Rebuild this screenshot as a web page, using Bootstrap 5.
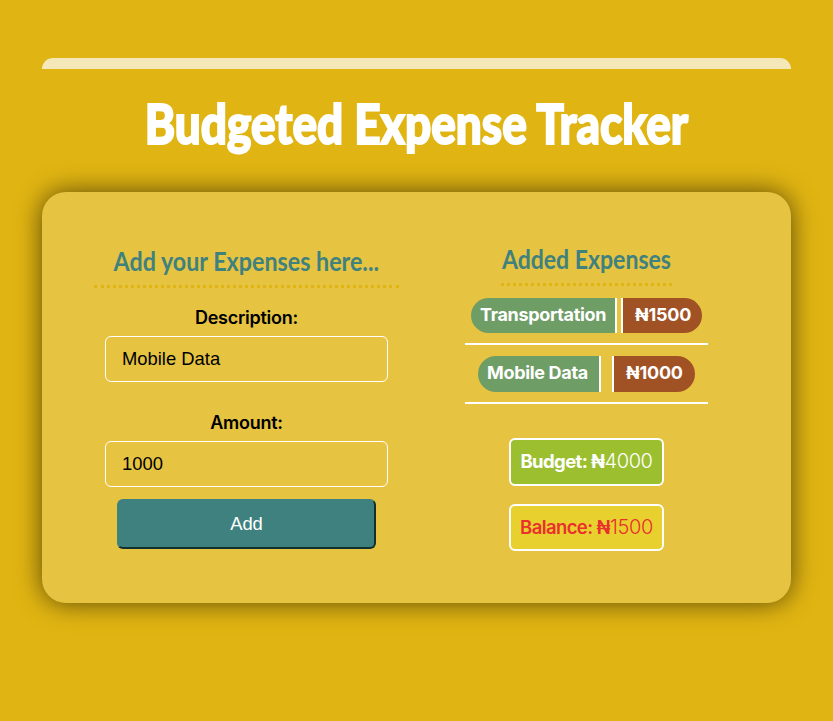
<!DOCTYPE html>
<html lang="en">
<head>
<meta charset="utf-8">
<meta name="viewport" content="width=device-width, initial-scale=1">
<title>Budgeted Expense Tracker</title>
<link href="https://cdn.jsdelivr.net/npm/bootstrap@5.3.0/dist/css/bootstrap.min.css" rel="stylesheet">
<style>
body{background:#e0b412;font-family:Inter,"Liberation Sans",sans-serif;font-size:18px;color:#000;min-height:721px;overflow:hidden}
.page{width:749px;margin-left:42px;padding-top:58px}
.top-strip{height:11px;border-radius:11px 11px 0 0;background:#f5e8b8}
.display-face{font-family:Lato,"Open Sans",sans-serif;white-space:nowrap}
.display-face span{display:inline-block}
.title{height:123px;padding-top:20px;line-height:67px;font-size:56px;font-weight:900;color:#fff}
.title span{transform:scaleX(.82);-webkit-text-stroke:2px #fff}
.panel{height:411px;border-radius:24px;background:#e6c341;box-shadow:0 0 26px rgba(0,0,0,.6);padding:52px 0 0 52px;gap:66px}
.entry{width:305px}
.summary{width:243px}
.heading{color:#3e817f;font-size:26px;font-weight:700;line-height:34px;border-bottom:3px dotted #e0b412;height:44px}
.heading span{transform:scaleX(.895)}
.summary .heading{width:171px;height:42px;line-height:31px}
.summary .heading span{transform:scaleX(.886)}
.form-label{font-weight:600;line-height:24px;letter-spacing:-.25px;margin:18px 0 6px}
.field + .form-label{margin-top:29px}
.field{width:283px;height:46px;padding:0 16px;border:1px solid #fff;border-radius:6px;background:transparent!important;color:#000;font:18.4px/44px "Liberation Sans",sans-serif}
.add-btn{width:259px;height:50px;margin-top:12px;padding:0;border:2px solid;border-color:#3e817f #12302f #12302f #3e817f;border-radius:6px;background:#3e817f;color:#fff;font:18.4px "Liberation Sans",sans-serif}
.expense{width:243px;padding:12px 0 10px;gap:4px;border-bottom:2px solid #fff;font-weight:700;color:#fff;letter-spacing:-.33px}
.expense div{height:35px;line-height:34px;white-space:nowrap}
.expense + .expense{padding-top:11px;gap:11px}
.expense + .expense div{height:36px}
.item-name{width:146px;background:#6f9d66;border-right:2px solid #fff;border-radius:18px 0 0 18px;padding-left:9px}
.item-cost{width:81px;background:#a15224;border-left:2px solid #fff;border-radius:0 18px 18px 0;padding-left:12px}
.expense + .expense .item-name{width:123px}
.expense + .expense .item-cost{width:83px}
.item-cost{letter-spacing:-.2px}
.total{width:155px;height:48px;border:2px solid #fff;border-radius:6px;line-height:43px;font-size:20px;white-space:nowrap}
.total b{letter-spacing:-.6px;font-size:18.5px}
.total .figure{font-weight:300;letter-spacing:-.4px}
.budget{margin-top:34px;background:#9bbf2f;color:#fff}
.balance{margin-top:18px;height:47px;background:#e8d02f;color:#e9302c}
.balance b{font-weight:600}
</style>
</head>
<body>
<main class="page">
<div class="top-strip"></div>
<h1 class="title display-face text-center mb-0"><span>Budgeted Expense Tracker</span></h1>
<section class="panel d-flex align-items-start">
<form class="entry d-flex flex-column align-items-center">
<h2 class="heading display-face w-100 text-center mb-0"><span>Add your Expenses here...</span></h2>
<label class="form-label" for="desc">Description:</label>
<input id="desc" class="form-control field" value="Mobile Data">
<label class="form-label" for="amount">Amount:</label>
<input id="amount" class="form-control field" value="1000">
<button type="button" class="btn add-btn">Add</button>
</form>
<div class="summary d-flex flex-column align-items-center">
<h2 class="heading display-face d-flex justify-content-center mb-0"><span>Added Expenses</span></h2>
<div class="expense d-flex justify-content-center"><div class="item-name">Transportation</div><div class="item-cost">₦1500</div></div>
<div class="expense d-flex justify-content-center"><div class="item-name">Mobile Data</div><div class="item-cost">₦1000</div></div>
<div class="total budget text-center"><b>Budget: ₦</b><span class="figure">4000</span></div>
<div class="total balance text-center"><b>Balance: ₦</b><span class="figure">1500</span></div>
</div>
</section>
</main>
<script src="https://cdn.jsdelivr.net/npm/bootstrap@5.3.0/dist/js/bootstrap.bundle.min.js"></script>
</body>
</html>
